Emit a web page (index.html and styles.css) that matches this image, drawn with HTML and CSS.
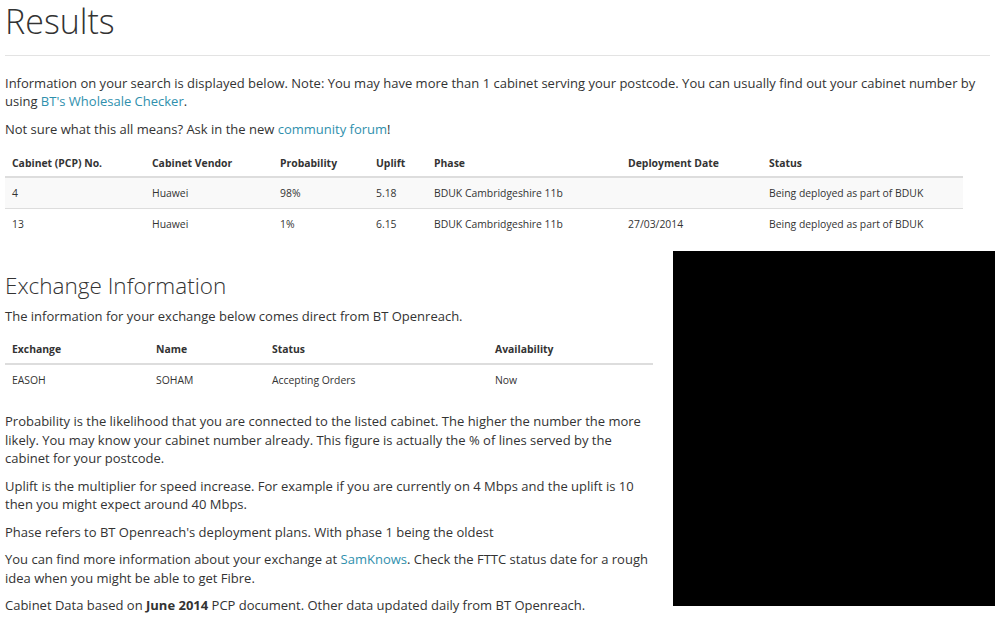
FILE: index.html
```html
<!DOCTYPE html>
<html>
<head>
<meta charset="utf-8">
<link rel="stylesheet" href="styles.css">
</head>
<body>
<div class="page">
  <h1 class="title">Results</h1>
  <hr class="rule">
  <p class="intro">Information on your search is displayed below. Note: You may have more than 1 cabinet serving your postcode. You can usually find out your cabinet number by using <a href="#">BT's Wholesale Checker</a>.</p>
  <p class="intro">Not sure what this all means? Ask in the new <a href="#">community forum</a>!</p>
  <table class="data cabinets">
    <thead>
      <tr><th class="c1">Cabinet (PCP) No.</th><th class="c2">Cabinet Vendor</th><th class="c3">Probability</th><th class="c4">Uplift</th><th class="c5">Phase</th><th class="c6">Deployment Date</th><th>Status</th></tr>
    </thead>
    <tbody>
      <tr class="odd"><td>4</td><td>Huawei</td><td>98%</td><td>5.18</td><td>BDUK Cambridgeshire 11b</td><td></td><td>Being deployed as part of BDUK</td></tr>
      <tr><td>13</td><td>Huawei</td><td>1%</td><td>6.15</td><td>BDUK Cambridgeshire 11b</td><td>27/03/2014</td><td>Being deployed as part of BDUK</td></tr>
    </tbody>
  </table>
  <div class="split">
    <div class="main">
      <h2 class="subtitle">Exchange Information</h2>
      <p class="lead">The information for your exchange below comes direct from BT Openreach.</p>
      <table class="data exchange">
        <thead>
          <tr><th class="e1">Exchange</th><th class="e2">Name</th><th class="e3">Status</th><th>Availability</th></tr>
        </thead>
        <tbody>
          <tr><td>EASOH</td><td>SOHAM</td><td>Accepting Orders</td><td>Now</td></tr>
        </tbody>
      </table>
      <div class="notes">
        <p>Probability is the likelihood that you are connected to the listed cabinet. The higher the number the more likely. You may know your cabinet number already. This figure is actually the % of lines served by the cabinet for your postcode.</p>
        <p>Uplift is the multiplier for speed increase. For example if you are currently on 4 Mbps and the uplift is 10 then you might expect around 40 Mbps.</p>
        <p>Phase refers to BT Openreach's deployment plans. With phase 1 being the oldest</p>
        <p>You can find more information about your exchange at <a href="#">SamKnows</a>. Check the FTTC status date for a rough idea when you might be able to get Fibre.</p>
        <p>Cabinet Data based on <strong>June 2014</strong> PCP document. Other data updated daily from BT Openreach.</p>
      </div>
    </div>
    <aside class="side">
      <div class="ad"></div>
    </aside>
  </div>
</div>
</body>
</html>
```

FILE: styles.css
```css
html, body {
  margin: 0;
  padding: 0;
  background: #fff;
}
body {
  font-family: "Open Sans", "Noto Sans", sans-serif;
  color: #333;
  font-size: 13px;
  line-height: 18px;
}
.page {
  padding: 0 9px 0 5px;
}
a {
  color: #2f90ad;
  text-decoration: none;
}
.title {
  font-weight: 300;
  font-size: 34px;
  line-height: 40px;
  margin: 0;
  padding-top: 1px;
  color: #333;
}
.rule {
  border: 0;
  border-top: 1px solid #e3e3e3;
  margin: 14px 0 18px 0;
  height: 0;
}
.intro {
  margin: 0 0 10px 0;
}
.data {
  border-collapse: collapse;
  font-size: 10.4px;
  line-height: 14px;
}
.data th {
  text-align: left;
  font-weight: 700;
  padding: 8px 7px 6px 7px;
  border-bottom: 2px solid #ddd;
}
.data td {
  padding: 8px 7px;
  border-top: 1px solid #ddd;
}
.data tbody tr:first-child td {
  border-top: 0;
}
.cabinets {
  width: 958px;
  margin-top: 7px;
}
.cabinets .odd td {
  background: #f9f9f9;
}
.c1 { width: 126px; }
.c2 { width: 114px; }
.c3 { width: 82px; }
.c4 { width: 44px; }
.c5 { width: 180px; }
.c6 { width: 127px; }
.split {
  display: flex;
  gap: 20px;
  margin-top: 12px;
}
.main {
  width: 648px;
}
.subtitle {
  font-weight: 300;
  font-size: 22.5px;
  line-height: 30px;
  margin: 20px 0 6px 0;
}
.lead {
  margin: 0 0 9px 0;
}
.exchange {
  width: 648px;
}
.exchange th {
  padding-bottom: 7px;
}
.e1 { width: 130px; }
.e2 { width: 102px; }
.e3 { width: 209px; }
.notes {
  margin-top: 17px;
}
.notes p {
  margin: 0 0 9px 0;
  line-height: 18.5px;
}
.side {
  flex: none;
}
.ad {
  width: 322px;
  height: 355px;
  background: #000;
}
```
